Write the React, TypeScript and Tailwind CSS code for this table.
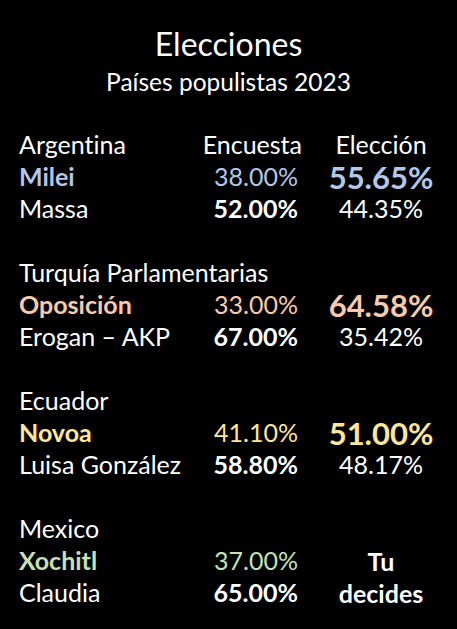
import React from 'react'

interface Candidate {
  name: string
  poll: string
  result: string
  highlight?: string
  winner?: boolean
}

interface Race {
  country: string
  showHeaders?: boolean
  candidates: Candidate[]
}

const races: Race[] = [
  {
    country: 'Argentina',
    showHeaders: true,
    candidates: [
      { name: 'Milei', poll: '38.00%', result: '55.65%', highlight: 'text-[#b4c7e7]', winner: true },
      { name: 'Massa', poll: '52.00%', result: '44.35%' },
    ],
  },
  {
    country: 'Turquía Parlamentarias',
    candidates: [
      { name: 'Oposición', poll: '33.00%', result: '64.58%', highlight: 'text-[#f8cbad]', winner: true },
      { name: 'Erogan – AKP', poll: '67.00%', result: '35.42%' },
    ],
  },
  {
    country: 'Ecuador',
    candidates: [
      { name: 'Novoa', poll: '41.10%', result: '51.00%', highlight: 'text-[#ffe699]', winner: true },
      { name: 'Luisa González', poll: '58.80%', result: '48.17%' },
    ],
  },
]

export default function App() {
  return (
    <div className="w-[457px] h-[629px] bg-black text-white font-['Lato',sans-serif] [font-variant-ligatures:none] overflow-hidden">
      <div className="pt-[24px] flex flex-col items-center">
        <h1 className="text-[32px] leading-[40px]">Elecciones</h1>
        <p className="text-[24.5px] leading-[32px] mt-[2px]">Países populistas 2023</p>
      </div>

      <div className="mt-[31px] pl-[19px] text-[25px]">
        {races.map((race) => (
          <div key={race.country} className="mb-[32px] grid grid-cols-[141px_110px_110px] gap-x-[28px] auto-rows-[32px] items-center">
            <div className={race.showHeaders ? 'whitespace-nowrap' : 'col-span-3'}>{race.country}</div>
            {race.showHeaders && (
              <>
                <div className="text-right -mr-[4px]">Encuesta</div>
                <div className="text-center">Elección</div>
              </>
            )}
            {race.candidates.map((c) => (
              <React.Fragment key={c.name}>
                <div className={c.highlight ? `font-bold whitespace-nowrap ${c.highlight}` : 'whitespace-nowrap'}>{c.name}</div>
                <div className={c.highlight ? `text-right ${c.highlight}` : 'text-right font-bold'}>{c.poll}</div>
                <div className={c.winner ? `text-center font-bold text-[31px] ${c.highlight}` : 'text-center'}>{c.result}</div>
              </React.Fragment>
            ))}
          </div>
        ))}

        <div className="grid grid-cols-[141px_110px_110px] gap-x-[28px] auto-rows-[32px] items-center">
          <div className="col-span-3">Mexico</div>
          <div className="font-bold text-[#c5e0b4]">Xochitl</div>
          <div className="text-right text-[#c5e0b4]">37.00%</div>
          <div className="text-center font-bold row-span-2 leading-[32px]">
            Tu
            <br />
            decides
          </div>
          <div>Claudia</div>
          <div className="text-right font-bold">65.00%</div>
        </div>
      </div>
    </div>
  )
}
